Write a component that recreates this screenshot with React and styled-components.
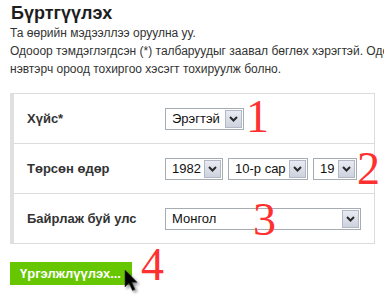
import React from "react";
import styled, { createGlobalStyle } from "styled-components";

const Global = createGlobalStyle`
  html, body { margin: 0; padding: 0; background: #fff; overflow: hidden; }
  body { font-family: "Liberation Sans", Arial, sans-serif; }
`;

const Page = styled.div`
  position: relative;
  width: 384px;
  height: 294px;
  overflow: hidden;
  padding: 2px 0 0 10px;
  box-sizing: border-box;
`;

const Title = styled.h1`
  margin: 0 0 0 1px;
  font-size: 18px;
  line-height: 22px;
  font-weight: bold;
  color: #1e1e1e;
`;

const Intro = styled.div`
  font-size: 12px;
  line-height: 18px;
  color: #333;
  white-space: nowrap;
`;

const Line = styled.div``;

const FormBox = styled.div`
  margin-top: 15px;
  width: 365px;
  box-sizing: border-box;
  border: 1px solid #dcdcdc;
  border-left: 4px solid #e0e0e0;
`;

const Row = styled.div`
  display: flex;
  align-items: center;
  height: 49px;
  padding-left: 13px;
  & + & {
    border-top: 1px solid #dcdcdc;
  }
`;

const Label = styled.div`
  width: 138px;
  font-size: 13px;
  font-weight: bold;
  color: #333;
`;

const Controls = styled.div`
  display: flex;
  gap: 5px;
`;

const SelectBox = styled.div`
  display: flex;
  align-items: center;
  box-sizing: border-box;
  width: ${(p) => p.$w}px;
  height: 22px;
  border: 1px solid #a5acb2;
  background: #fff;
  padding: 1px 1px 1px 6px;
`;

const SelectText = styled.span`
  flex: 1;
  font-size: 13px;
  color: #111;
  white-space: nowrap;
`;

const ArrowBtn = styled.span`
  display: flex;
  align-items: center;
  justify-content: center;
  box-sizing: border-box;
  width: 17px;
  height: 18px;
  border: 1px solid #b3b8c6;
  background: linear-gradient(#e8ebf2, #cdd2de);
`;

const Submit = styled.button`
  display: block;
  margin-top: 18px;
  width: 122px;
  height: 23px;
  padding: 0 0 0 10px;
  border: none;
  background: #66c600;
  color: #fff;
  font-family: "Liberation Sans", Arial, sans-serif;
  font-size: 13px;
  font-weight: bold;
  text-align: left;
`;

const Mark = styled.span`
  position: absolute;
  left: ${(p) => p.$x}px;
  top: ${(p) => p.$y}px;
  font-family: "Liberation Serif", "Times New Roman", serif;
  font-size: 46px;
  line-height: 46px;
  color: #ff3030;
`;

const Cursor = styled.svg`
  position: absolute;
  left: 124px;
  top: 269px;
  filter: drop-shadow(2px 2px 1.5px rgba(0, 0, 0, 0.45));
`;

const Chevron = () => (
  <svg width="9" height="6" viewBox="0 0 9 6">
    <path d="M1 1 L4.5 4.5 L8 1" fill="none" stroke="#2a2a2a" strokeWidth="2" />
  </svg>
);

const Select = ({ w, children }) => (
  <SelectBox $w={w}>
    <SelectText>{children}</SelectText>
    <ArrowBtn>
      <Chevron />
    </ArrowBtn>
  </SelectBox>
);

export default function App() {
  return (
    <>
      <Global />
      <Page>
        <Title>Бүртгүүлэх</Title>
        <Intro>
          <Line>Та өөрийн мэдээллээ оруулна уу.</Line>
          <Line>
            Одооор тэмдэглэгдсэн (*) талбаруудыг заавал бөглөх хэрэгтэй. Одоо бөглөхгүй бол дараа нь системд
          </Line>
          <Line>нэвтэрч ороод тохиргоо хэсэгт тохируулж болно.</Line>
        </Intro>
        <FormBox>
          <Row>
            <Label>Хүйс*</Label>
            <Controls>
              <Select w={79}>Эрэгтэй</Select>
            </Controls>
          </Row>
          <Row>
            <Label>Төрсөн өдөр</Label>
            <Controls>
              <Select w={58}>1982</Select>
              <Select w={80}>10-р сар</Select>
              <Select w={44}>19</Select>
            </Controls>
          </Row>
          <Row>
            <Label>Байрлаж буй улс</Label>
            <Controls>
              <Select w={196}>Монгол</Select>
            </Controls>
          </Row>
        </FormBox>
        <Submit>Үргэлжлүүлэх...</Submit>
        <Mark $x={246} $y={94}>1</Mark>
        <Mark $x={357} $y={146}>2</Mark>
        <Mark $x={253} $y={197}>3</Mark>
        <Mark $x={141} $y={242}>4</Mark>
        <Cursor width="16" height="24" viewBox="0 0 16 24">
          <path d="M1 1 L1 18 L5 14 L8.5 21.5 L11 20.5 L7.8 13.3 L13 13.3 Z" fill="#000" stroke="#333" strokeWidth="0.6" />
        </Cursor>
      </Page>
    </>
  );
}
